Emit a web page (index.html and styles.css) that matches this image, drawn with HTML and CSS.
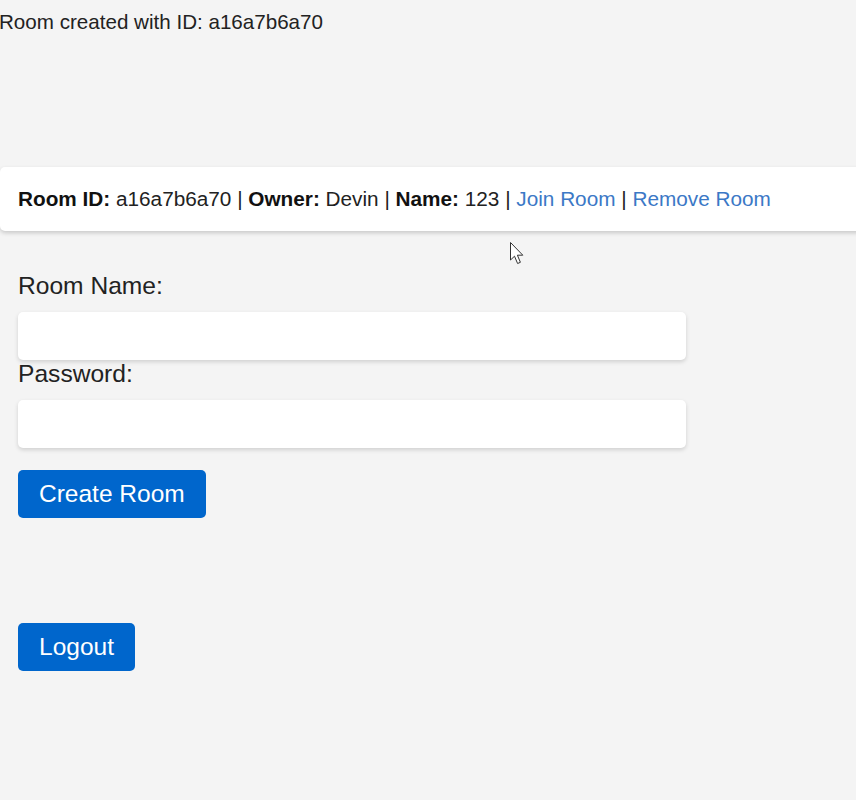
FILE: index.html
```html
<!DOCTYPE html>
<html>
<head>
<meta charset="utf-8">
<link rel="stylesheet" href="styles.css">
</head>
<body>
<p class="status">Room created with ID: a16a7b6a70</p>
<ul class="room-list">
  <li class="room-item"><b>Room ID:</b>&nbsp;a16a7b6a70 |&nbsp;<b>Owner:</b>&nbsp;Devin |&nbsp;<b>Name:</b>&nbsp;123 |&nbsp;<a href="#">Join Room</a>&nbsp;|&nbsp;<a href="#">Remove Room</a></li>
</ul>
<form class="room-form">
  <label class="field-label">Room Name:</label>
  <input class="field-input" type="text">
  <label class="field-label">Password:</label>
  <input class="field-input" type="password">
  <button type="button" class="btn create-btn">Create Room</button>
</form>
<div class="logout-wrap">
  <button type="button" class="btn">Logout</button>
</div>
<svg class="cursor" width="17" height="25" viewBox="0 0 17 25">
  <path d="M1.5 1.5 L1.5 19 L5.5 15.2 L8.6 22.5 L11.4 21.3 L8.4 14.2 L13.8 14.2 Z" fill="#fff" stroke="#333" stroke-width="1" stroke-linejoin="round"/>
</svg>
</body>
</html>
```
FILE: styles.css
```css
* { box-sizing: border-box; }
html { overflow: hidden; }
body {
  margin: 0;
  background: #f4f4f4;
  font-family: "Liberation Sans", Arial, sans-serif;
  color: #222;
  position: relative;
  min-height: 800px;
  overflow: hidden;
}
.status {
  margin: 0 0 0 -1px;
  padding-top: 10px;
  font-size: 20.6px;
  line-height: 24px;
}
.room-list {
  list-style: none;
  margin: 133px -12px 0 0;
  padding: 0;
}
.room-item {
  display: flex;
  align-items: center;
  height: 64px;
  padding: 0 18px;
  background: #fff;
  border-radius: 5px;
  box-shadow: 0 2px 4px rgba(0,0,0,0.18);
  font-size: 20.75px;
  color: #222;
  white-space: pre;
}
.room-item b { color: #111; }
.room-item a {
  color: #3b78c6;
  text-decoration: none;
}
.room-form {
  display: flex;
  flex-direction: column;
  align-items: flex-start;
  padding: 0 18px;
  margin-top: 41px;
}
.field-label {
  font-size: 24.6px;
  line-height: 28px;
  color: #222;
  margin-bottom: 12px;
}
.field-input {
  width: 668px;
  height: 48px;
  border: none;
  border-radius: 5px;
  background: #fff;
  box-shadow: 0 2px 4px rgba(0,0,0,0.15);
  margin: 0;
  font-size: 20px;
  padding: 0 10px;
}
.btn {
  height: 48px;
  padding: 0 21px;
  border: none;
  border-radius: 5px;
  background: #0066cc;
  color: #fff;
  font-family: "Liberation Sans", Arial, sans-serif;
  font-size: 24.5px;
}
.create-btn { margin-top: 22px; }
.logout-wrap {
  padding: 0 18px;
  margin-top: 105px;
}
.cursor {
  position: absolute;
  left: 509px;
  top: 241px;
}
```
